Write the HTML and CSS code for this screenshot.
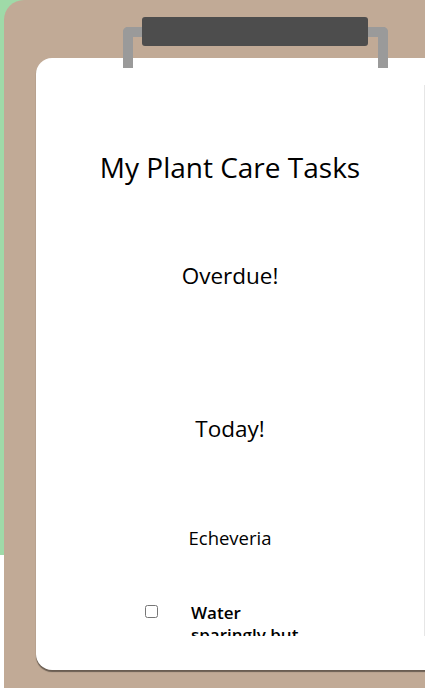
FILE: index.html
```html
<!DOCTYPE html>
<html lang="en">
<head>
<meta charset="utf-8">
<title>My Plant Care Tasks</title>
<link rel="stylesheet" href="styles.css">
</head>
<body>
<div class="scene">
  <div class="clipboard">
    <div class="clip">
      <div class="clip-bracket"></div>
      <div class="clip-bar"></div>
    </div>
    <div class="paper">
      <div class="scroller">
        <h1 class="title">My Plant Care Tasks</h1>
        <section class="group">
          <h2 class="group-title">Overdue!</h2>
        </section>
        <section class="group">
          <h2 class="group-title today">Today!</h2>
          <h3 class="plant">Echeveria</h3>
          <div class="task">
            <input type="checkbox" class="task-check">
            <span class="task-text">Water sparingly but thoroughly when the soil is completely dry</span>
          </div>
        </section>
      </div>
    </div>
  </div>
</div>
</body>
</html>
```
FILE: styles.css
```css
html, body {
  margin: 0;
  padding: 0;
  overflow: hidden;
  background: #ffffff;
}
body {
  font-family: "Open Sans", "Noto Sans", sans-serif;
  color: #000;
  width: 425px;
  height: 688px;
}
.scene {
  height: 555px;
  background: #9fdaa8;
  padding-left: 4px;
}
.clipboard {
  position: relative;
  width: 470px;
  height: 740px;
  background: #c1aa96;
  border-radius: 20px 20px 0 0;
  padding: 58px 0 0 32px;
  box-sizing: border-box;
}
.clip {
  position: absolute;
  left: 119px;
  top: 17px;
  width: 265px;
  height: 51px;
  z-index: 2;
}
.clip-bracket {
  position: absolute;
  left: 0;
  top: 10px;
  width: 265px;
  height: 41px;
  box-sizing: border-box;
  border: 10px solid #9a9a9a;
  border-bottom: none;
  border-radius: 5px 5px 0 0;
}
.clip-bar {
  position: absolute;
  left: 19px;
  top: 0;
  width: 226px;
  height: 29px;
  background: #4d4d4d;
  border-radius: 3px;
}
.paper {
  width: 420px;
  height: 612px;
  background: #ffffff;
  border-radius: 16px;
  box-shadow: 0 2px 1px rgba(0, 0, 0, 0.45);
  padding-top: 27px;
  box-sizing: border-box;
}
.scroller {
  width: 389px;
  height: 551px;
  overflow: hidden;
  border-right: 1px solid #e6e6e6;
  box-sizing: border-box;
  text-align: center;
}
.title {
  margin: 64px 0 0;
  font-size: 28px;
  line-height: 36px;
  font-weight: 400;
}
.group {
  display: flex;
  flex-direction: column;
}
.group-title {
  margin: 77px 0 0;
  font-size: 22.5px;
  line-height: 28px;
  font-weight: 400;
}
.group-title.today {
  margin-top: 125px;
}
.plant {
  margin: 83px 0 0;
  font-size: 18.5px;
  line-height: 24px;
  font-weight: 400;
}
.task {
  margin-top: 52px;
  display: flex;
  align-items: flex-start;
  padding-left: 109px;
  gap: 33px;
  text-align: left;
}
.task-check {
  margin: 3px 0 0;
  width: 13px;
  height: 13px;
  flex: none;
}
.task-text {
  width: 118px;
  font-size: 17px;
  line-height: 22px;
  font-weight: 600;
}
```
